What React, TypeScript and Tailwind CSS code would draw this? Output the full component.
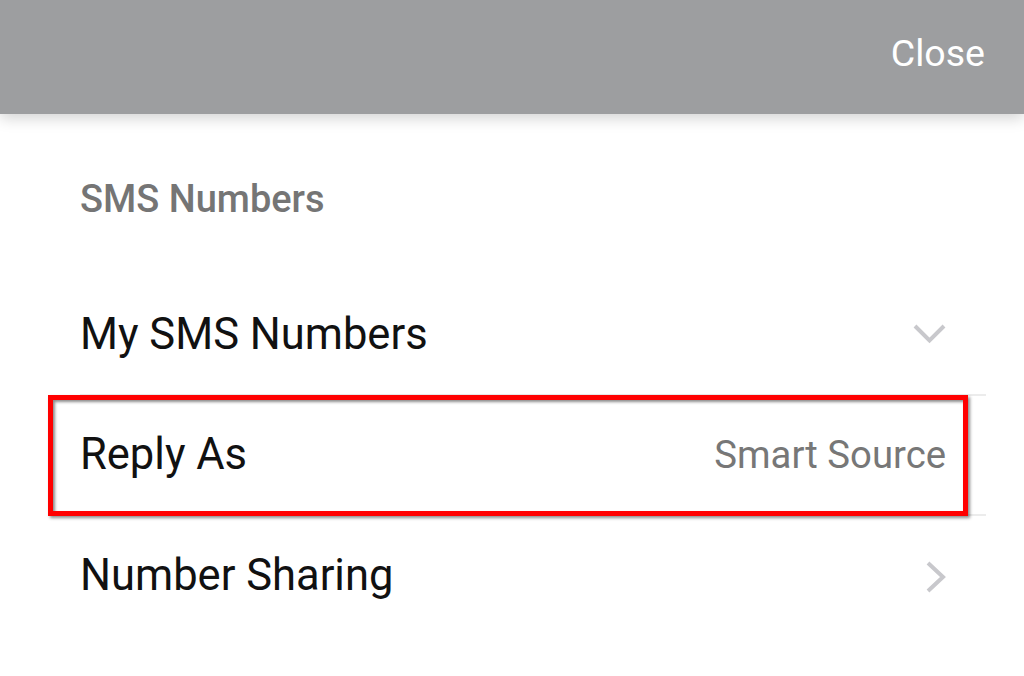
const font = { fontFamily: 'Roboto, "Noto Sans", sans-serif' };

function Row({ label, children, border }: { label: string; children?: React.ReactNode; border?: boolean }) {
  return (
    <div className={`flex h-[120px] items-center justify-between pr-[40px] ${border ? 'border-b-2 border-[#ececec]' : ''}`}>
      <span className="text-[43.5px] text-[#111] leading-none">{label}</span>
      {children}
    </div>
  );
}

export default function App() {
  return (
    <div className="relative h-[676px] w-[1024px] overflow-hidden bg-white" style={font}>
      {/* top bar */}
      <div className="relative z-10 flex h-[114px] items-start justify-end bg-[#9d9ea0] pr-[39px] pt-[31px] shadow-[0_4px_14px_rgba(0,0,0,0.18)]">
        <span className="text-[37.5px] leading-[44px] text-white">Close</span>
      </div>

      <div className="pl-[80px]">
        <div className="pt-[63px] text-[38px] font-medium leading-[44px] text-[#757575]">SMS Numbers</div>

        <div className="mt-[55px] mr-[38px]">
          <Row label="My SMS Numbers" border>
            <svg width="33" height="20" viewBox="0 0 33 20" className="-mt-[2px]">
              <polyline points="2,2 16.5,16.5 31,2" fill="none" stroke="#c8c8cc" strokeWidth="4" />
            </svg>
          </Row>
          <div className="relative">
            <Row label="Reply As" border>
              <span className="text-[38.3px] leading-none text-[#777]">Smart Source</span>
            </Row>
            <div className="pointer-events-none absolute left-[-32px] top-[-1px] h-[121px] w-[920px] border-[5px] border-[#ff0000] shadow-[2px_2px_3px_rgba(0,0,0,0.45),inset_2px_2px_3px_rgba(0,0,0,0.45)]" />
          </div>
          <Row label="Number Sharing">
            <svg width="20" height="32" viewBox="0 0 20 32" className="mt-[1px]">
              <polyline points="2,2 17,16 2,30" fill="none" stroke="#c8c8cc" strokeWidth="4" />
            </svg>
          </Row>
        </div>
      </div>
    </div>
  );
}
